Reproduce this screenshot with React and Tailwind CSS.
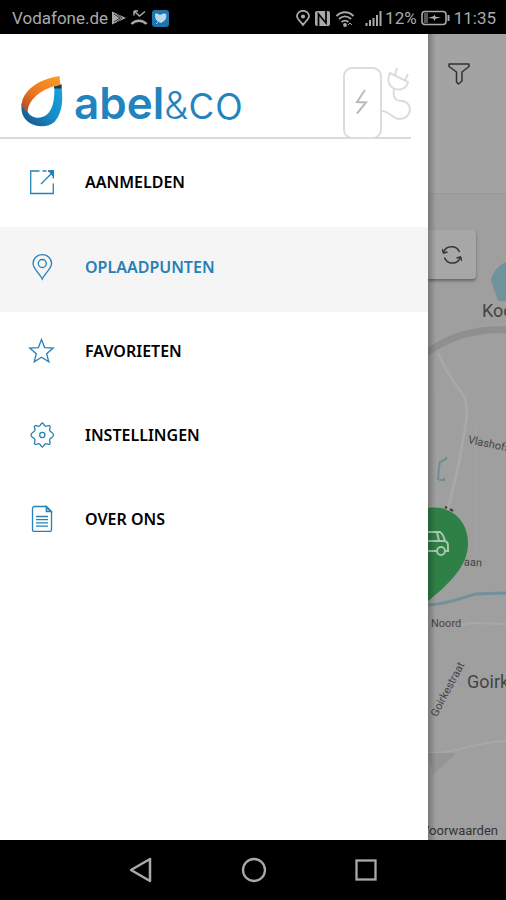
import React from 'react';

const iconProps = {
  width: 28,
  height: 28,
  viewBox: '0 0 28 28',
  fill: 'none',
  stroke: 'currentColor',
  strokeWidth: 1.3,
  'aria-hidden': true,
};

const LoginIcon = () => (
  <svg {...iconProps}>
    <path d="M11.500 3H2.700v22.500h22.600v-10M14.500 3h4M13 16 25 4M20 3h5.300v7.500" />
    <path d="M21 3h4.300v5Z" fill="currentColor" />
  </svg>
);

const PinIcon = () => (
  <svg {...iconProps}>
    <path d="M14.300 26C12.500 21.500 5 15.500 5 10.400a9.300 8.800 0 0 1 18.600 0C23.600 15.500 16 21.500 14.300 26Z" />
    <circle cx="14.300" cy="10.500" r="4" />
  </svg>
);

const StarIcon = () => (
  <svg {...iconProps}>
    <path d="m13.500 2.500 3.100 8.100 8.600.5-6.600 5.600 2.200 8.200-7.300-4.700-7.300 4.700 2.100-8.200-6.600-5.600 8.700-.5Z" />
  </svg>
);

const GearIcon = () => (
  <svg {...iconProps}>
    <path d="M14.300 2c1.300 0 1.500 2.600 3 3.200s3.600-1.200 4.600-.2-.8 3-.2 4.500 3.800 1.900 3.800 4.500-3.200 2.800-3.800 4.300 1.200 3.700.2 4.700-3.100-.8-4.600-.2-1.700 3.200-3 3.200-1.500-2.600-3-3.200-3.600 1.200-4.600.2.800-3.200.2-4.700S3 16.600 3 14s3.300-3 3.900-4.500-1.200-3.500-.2-4.500 3.100.8 4.600.2S13 2 14.300 2Z" />
    <circle cx="14.300" cy="14" r="2.600" />
  </svg>
);

const DocumentIcon = () => (
  <svg {...iconProps}>
    <path d="M6.500 1.500h11.800l5.200 5.200v18.200a1.500 1.500 0 0 1-1.500 1.500H6A1.500 1.500 0 0 1 4.500 24.900V3.500a2 2 0 0 1 2-2Z" />
    <path d="M18.300 1.500v5.200h5.200Z" fill="currentColor" fillOpacity=".5" />
    <path d="M8 11.500h12M8 14.700h12M8 17.900h12M8 21.100h12" />
  </svg>
);

const menu = [
  { label: 'AANMELDEN', Icon: LoginIcon },
  { label: 'OPLAADPUNTEN', Icon: PinIcon, active: true },
  { label: 'FAVORIETEN', Icon: StarIcon },
  { label: 'INSTELLINGEN', Icon: GearIcon },
  { label: 'OVER ONS', Icon: DocumentIcon },
];

function StatusBar() {
  return (
    <header className="flex h-[34px] shrink-0 items-center justify-between bg-black pt-0.5 pr-2.5 pl-3 text-[17px] leading-5 text-[#aaa]">
      <div className="flex items-center gap-1">
        <span>Vodafone.de</span>
        <svg width="14" height="16" viewBox="0 0 14 16" fill="currentColor" aria-hidden="true">
          <path d="M0 1.500 14 8 0 14.500Z" />
          <path d="m2 4 6 4-6 4M5 4l5 4-5 4" fill="none" stroke="#333" />
        </svg>
        <svg width="18" height="18" viewBox="0 0 18 18" fill="none" stroke="currentColor" aria-hidden="true">
          <path d="M4 2v4.500M4 2h4M4 2l5.500 5L15 2.500" strokeWidth="1.500" />
          <path d="M1.500 15c4-4.500 11-4.500 15 0" strokeWidth="2.500" />
        </svg>
        <svg width="17" height="17" viewBox="0 0 17 17" aria-hidden="true">
          <rect width="17" height="17" rx="3" fill="#1d75ad" />
          <path d="M3 4c2-1 3 0 5 1 2-1 4-2 6-1 1 4 0 6-5 9-5-2-6-4-6-9Z" fill="#b9d9e8" />
          <path d="m6 12-2 2" stroke="#b9d9e8" />
        </svg>
      </div>
      <div className="flex items-center gap-1">
        <svg width="14" height="16" viewBox="0 0 14 16" fill="none" stroke="currentColor" strokeWidth="1.700" aria-hidden="true">
          <path d="M7 15C5.500 12 1 9.500 1 6.300a6 5.500 0 0 1 12 0C13 9.500 8.500 12 7 15Z" />
          <circle cx="7" cy="6.500" r="1.200" fill="currentColor" />
        </svg>
        <svg width="17" height="17" viewBox="0 0 17 17" aria-hidden="true">
          <rect x="1" y="1" width="15" height="15" rx="2" fill="currentColor" />
          <path d="M4.500 16V4l7.500 9V1" fill="none" stroke="#000" strokeWidth="1.700" />
        </svg>
        <svg width="20" height="17" viewBox="0 0 20 17" fill="none" stroke="currentColor" strokeWidth="1.800" aria-hidden="true">
          <path d="M1.500 6c5-5 12-5 17 0M4 9c4-3.500 8-3.500 12 0M6.500 12c2.500-2 4.500-2 7 0" />
          <circle cx="10" cy="15" r="1" fill="currentColor" />
          <path d="m13 15 2-2 2 2" strokeWidth="1" />
        </svg>
        <div className="flex items-center pl-1.5">
          <svg width="18" height="17" viewBox="0 0 18 17" stroke="currentColor" strokeWidth="2" aria-hidden="true">
            <path d="M1.500 16v-3M5 16v-6M8.500 16V8M12 16V5M15.500 16V1" />
          </svg>
          <span className="pl-0.5">12%</span>
        </div>
        <svg width="29" height="16" viewBox="0 0 29 16" fill="none" stroke="currentColor" aria-hidden="true">
          <rect x="1" y="1.500" width="24" height="13" rx="3" strokeWidth="1.600" />
          <path d="M3 3h4v10H3Z" fill="#555" stroke="none" />
          <path d="M27.500 5v6" strokeWidth="2" />
          <path d="m7 8 6-2V4.500l2 2.500h5l-6 2v2l-2-2.500Z" fill="currentColor" stroke="none" />
        </svg>
        <time>11:35</time>
      </div>
    </header>
  );
}

function Brand() {
  return (
    <div className="relative flex h-[109px] shrink-0 items-start pt-[42px] pl-5">
      <svg width="43" height="52" viewBox="0 0 43 52" className="shrink-0" role="img" aria-label="abel&amp;co logo">
        <defs>
          <linearGradient id="flame" x1="1" y1="0" x2="0" y2="1">
            <stop offset="0" stopColor="#fa9d25" />
            <stop offset=".6" stopColor="#ed741f" />
            <stop offset="1" stopColor="#a64627" />
          </linearGradient>
          <linearGradient id="drop" x1="1" y1="0" x2="0" y2="1">
            <stop offset="0" stopColor="#16a5dd" />
            <stop offset=".5" stopColor="#168bc8" />
            <stop offset="1" stopColor="#164b82" />
          </linearGradient>
        </defs>
        <path d="M41.500 10c2 17 0 28-7 36-9 8-31 5-33-12l-.2-7 6 8c3 7 12 9 19 4 8-6 8-19 8.200-28Z" fill="url(#drop)" />
        <path d="M34 10.500 41.500 8v4.500H34Z" fill="#20384b" />
        <path d="M39.500 0 40.500 9C25 11 9 21 7.500 36 3 33 1.500 29 2 26 5 13 20 3 39.500 0Z" fill="url(#flame)" />
      </svg>
      <div className="flex items-baseline pl-[11px] font-['Inter',sans-serif] leading-[52px] text-[#1f84c0]">
        <span className="text-[44px] font-semibold">abel</span>
        <span className="text-[38px] font-light">&amp;</span>
        <span className="text-[48px] font-light">co</span>
      </div>
      <div className="absolute bottom-1 left-0 h-0.5 w-[411px] bg-[#d9d9d9]" />
      <svg
        className="absolute bottom-[3px] left-[340px]"
        width="74"
        height="74"
        viewBox="0 0 74 74"
        fill="none"
        stroke="#dcdcdc"
        strokeWidth="2"
        aria-hidden="true"
      >
        <rect x="4" y="2" width="37" height="70" rx="8" />
        <path d="m25 24-8 12 9 .500-9 11" stroke="#bbb" />
        <path d="M41 45c8-1 11 8 18 8 14 0 14-17 3-18-8 0-9-5-8-12M50 7l18 9c-2 8-10 9-15 6-5-3-6-9-3-15ZM55 9l2-7M65 14l3-6" />
      </svg>
    </div>
  );
}

function MapPane() {
  return (
    <main className="relative min-w-0 flex-1 overflow-hidden bg-[#9f9f9f] text-[#444]">
      <svg className="absolute top-0 left-0" width="78" height="806" viewBox="0 0 78 806" fill="none" aria-hidden="true">
        <g stroke="#a2a2a2" strokeWidth="1">
          <path d="M10 360v160M48 390v130M62 380v150M0 465h78M20 520h58M40 370h38M0 620h78M12 620v180M28 620v170M44 620v170M60 620v170M0 760h78" />
        </g>
        <path d="m10 319 7 15 20 30c5 20-2 35-5 60l-14 60" stroke="#a8a8a8" strokeWidth="3" />
        <path d="M0 719c24 2 40-10 78-12M28 592l15-3 35 1" stroke="#a8a8a8" strokeWidth="2" />
        <path d="M0 719h28L5 741Z" fill="#959595" />
        <path d="M-2 319c20-14 45-25 82-23" stroke="#8f8f8f" strokeWidth="7" />
        <path d="m10 446 1-13 1-5 6-3v-2M11 446h5v-2" stroke="#6f8d95" strokeWidth="2" />
        <path d="M0 571c22-1 35-8 48-11l30-1" stroke="#73909c" strokeWidth="3" />
        <path d="M80 227c-9 4-15 10-17 19l7 21h10Z" fill="#6f929d" />
      </svg>

      <div className="relative h-40 border-b border-[#999] bg-[#a3a3a3] pt-[29px] pl-5">
        <button type="button" aria-label="Filter" className="block text-[#303030]">
          <svg width="22" height="22" viewBox="0 0 22 22" fill="none" stroke="currentColor" strokeWidth="1.500" strokeLinejoin="round" aria-hidden="true">
            <path d="M1 1h20v2.500L14 9v9l-3.500 3L8.500 19V9L1 3.500Z" />
          </svg>
        </button>
      </div>

      <button
        type="button"
        aria-label="Vernieuwen"
        className="relative mt-9 flex h-[49px] w-12 items-center justify-center rounded-r-sm bg-[#a7a7a7] text-[#353535] shadow-[0_2px_3px_#666]"
      >
        <svg width="20" height="20" viewBox="0 0 20 20" fill="none" stroke="currentColor" strokeWidth="1.500" aria-hidden="true">
          <path d="M1.500 7.500C4-.500 15 0 17.500 7M18.500 12C16 20 5 20 2.500 12.500" />
          <path d="m0 4 1.500 4 4-1M20 16l-1.500-4-4 1" />
        </svg>
      </button>

      <span className="absolute top-[265px] left-[54px] text-lg leading-6 whitespace-nowrap">Koolhoven</span>
      <span className="absolute top-[398px] left-10 origin-left rotate-12 text-[11px] leading-4 whitespace-nowrap">Vlashofstraat</span>
      <span className="absolute top-[521px] left-9 rotate-3 text-[11px] leading-4">aan</span>
      <span className="absolute top-[582px] left-[3px] text-[11px] leading-4">Noord</span>
      <span className="absolute top-[674px] left-[6px] origin-left -rotate-62 text-[11px] leading-4">Goirkestraat</span>
      <span className="absolute top-[636px] left-[39px] text-lg leading-6 whitespace-nowrap">Goirke</span>
      <span className="absolute right-2 bottom-px text-[13px] leading-4 whitespace-nowrap text-[#333]">Voorwaarden</span>

      <svg className="absolute top-[470px] left-0" width="42" height="100" viewBox="0 0 42 100" fill="none" aria-hidden="true">
        <path d="M0 4c23-3 40 12 40 36C40 62 20 81 0 97Z" fill="#2f8046" />
        <path d="M-5 28H12c3 2 4 5 5 9 3 1 3 3 3 7v3h-3M9 47H-5M-5 37h22M9 28l2 9" stroke="#a9c6ae" strokeWidth="2" />
        <circle cx="13" cy="47" r="4" stroke="#a9c6ae" strokeWidth="2" />
        <path d="m17 3 2 1M22 5l3 2" stroke="#333" strokeWidth="2" />
      </svg>
      <div className="absolute inset-y-0 left-0 w-2 bg-linear-to-r from-black/25 to-transparent" />
    </main>
  );
}

function NavigationBar() {
  return (
    <footer className="flex h-[60px] shrink-0 items-center justify-center gap-[88px] bg-black text-[#aaa]">
      <button type="button" aria-label="Terug">
        <svg width="24" height="26" viewBox="0 0 24 26" fill="none" stroke="currentColor" strokeWidth="2.500" strokeLinejoin="round" aria-hidden="true">
          <path d="M21 2v22L2 13Z" />
        </svg>
      </button>
      <button type="button" aria-label="Startscherm">
        <svg width="26" height="26" viewBox="0 0 26 26" fill="none" stroke="currentColor" strokeWidth="2.300" aria-hidden="true">
          <circle cx="13" cy="13" r="11" />
        </svg>
      </button>
      <button type="button" aria-label="Recente apps">
        <svg width="22" height="22" viewBox="0 0 22 22" fill="none" stroke="currentColor" strokeWidth="2.300" aria-hidden="true">
          <rect x="1.500" y="1.500" width="19" height="19" />
        </svg>
      </button>
    </footer>
  );
}

export default function App() {
  return (
    <div className="flex h-screen flex-col overflow-hidden bg-white font-['Roboto',sans-serif]">
      <StatusBar />
      <div className="flex min-h-0 flex-1">
        <aside className="flex w-[428px] max-w-[88%] shrink-0 flex-col bg-white">
          <Brand />
          <nav>
            <ul>
              {menu.map(({ label, Icon, active }) => (
                <li key={label}>
                  <a
                    href="#"
                    aria-current={active ? 'page' : undefined}
                    className={
                      active
                        ? 'flex h-[85px] items-center gap-[29px] bg-[#f5f5f5] pb-1.5 pl-7 text-[#2581b8]'
                        : 'flex h-[84px] items-center gap-[29px] pb-1.5 pl-7 text-black'
                    }
                  >
                    <span className="text-[#2581b8]">
                      <Icon />
                    </span>
                    <span className="font-['Noto_Sans',sans-serif] text-base leading-6 font-semibold">{label}</span>
                  </a>
                </li>
              ))}
            </ul>
          </nav>
        </aside>
        <MapPane />
      </div>
      <NavigationBar />
    </div>
  );
}
